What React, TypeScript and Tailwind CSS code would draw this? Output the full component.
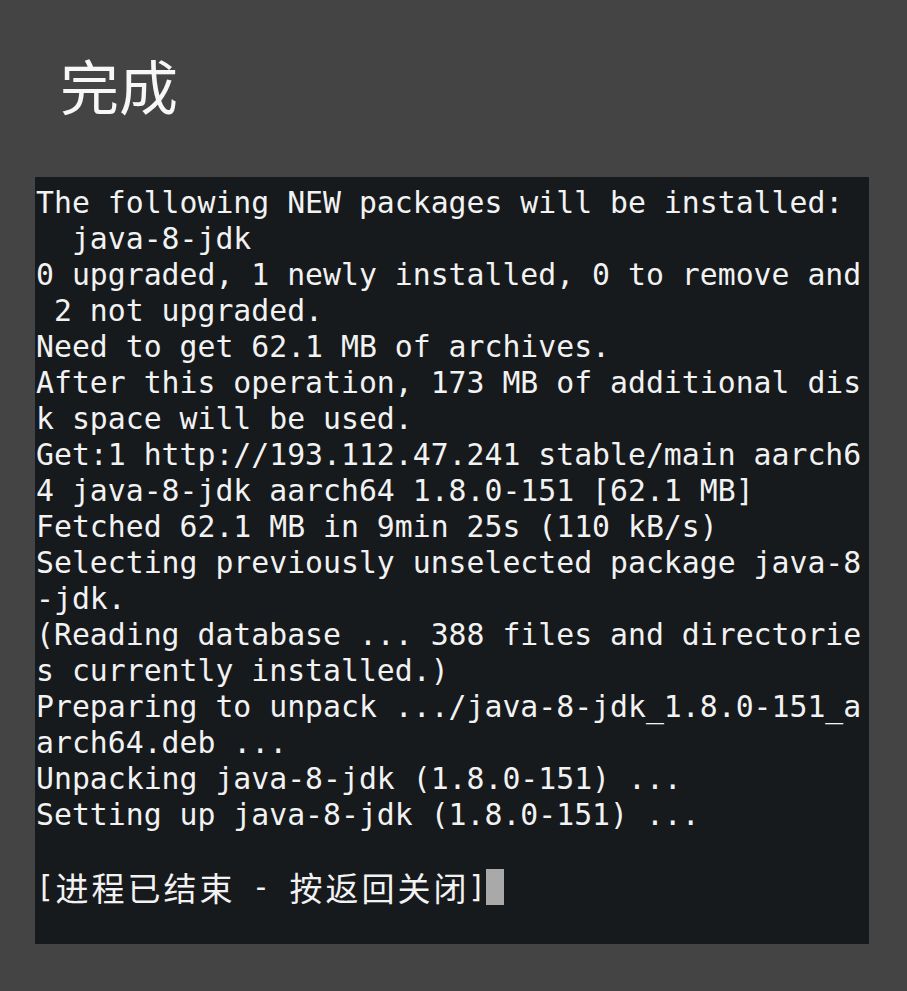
const lines: string[] = [
  "The following NEW packages will be installed:",
  "  java-8-jdk",
  "0 upgraded, 1 newly installed, 0 to remove and",
  " 2 not upgraded.",
  "Need to get 62.1 MB of archives.",
  "After this operation, 173 MB of additional dis",
  "k space will be used.",
  "Get:1 http://193.112.47.241 stable/main aarch6",
  "4 java-8-jdk aarch64 1.8.0-151 [62.1 MB]",
  "Fetched 62.1 MB in 9min 25s (110 kB/s)",
  "Selecting previously unselected package java-8",
  "-jdk.",
  "(Reading database ... 388 files and directorie",
  "s currently installed.)",
  "Preparing to unpack .../java-8-jdk_1.8.0-151_a",
  "arch64.deb ...",
  "Unpacking java-8-jdk (1.8.0-151) ...",
  "Setting up java-8-jdk (1.8.0-151) ...",
  "",
];

// CJK glyphs take two terminal cells
function Wide({ text }: { text: string }) {
  return (
    <>
      {Array.from(text).map((ch, i) => (
        <span
          key={i}
          className="inline-block w-[36px] text-center text-[33px] font-['Noto_Sans_CJK_SC',sans-serif]"
        >
          {ch}
        </span>
      ))}
    </>
  );
}

export default function App() {
  return (
    <div className="w-[907px] h-[991px] bg-[#444444] overflow-hidden">
      <div className="h-[177px] pl-[60px] pt-[55px]">
        <h1 className="text-[59px] leading-none text-[#f7f7f7] font-['Noto_Sans_CJK_SC',sans-serif]">
          完成
        </h1>
      </div>

      <div className="ml-[35px] w-[834px] h-[767px] bg-[#171a1d] pt-[8px] pl-px text-[29.8px] leading-[36px] text-[#f2f2f2] whitespace-pre font-['DejaVu_Sans_Mono',monospace]">
        {lines.map((l, i) => (
          <div key={i} className="h-[36px]">
            {l}
          </div>
        ))}
        <div className="h-[36px] flex items-stretch">
          <span className="inline-block w-[18px]">[</span>
          <Wide text="进程已结束" />
          <span className="inline-block w-[54px]"> - </span>
          <Wide text="按返回关闭" />
          <span className="inline-block w-[18px]">]</span>
          <span className="inline-block w-[18px] bg-[#a9a9a9]" />
        </div>
      </div>
    </div>
  );
}
